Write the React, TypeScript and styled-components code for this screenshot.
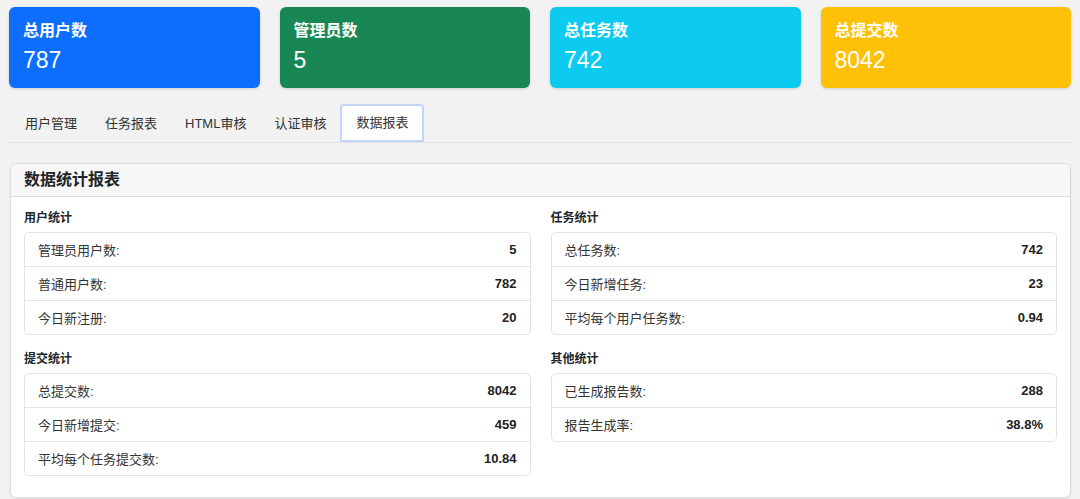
import React from "react";
import styled, { createGlobalStyle } from "styled-components";

const Global = createGlobalStyle`
  body { margin: 0; background: #f2f2f2; font-family: "Helvetica Neue", "Liberation Sans", "Noto Sans CJK SC", sans-serif; color: #212529; }
`;
const Page = styled.div`padding: 7px 9px 8px 9px;`;
const Cards = styled.div`display: grid; grid-template-columns: repeat(4, 1fr); gap: 20px;`;
const Card = styled.div<{ $bg: string }>`
  background: ${p => p.$bg}; color: #fff; border-radius: 6px; height: 81px; box-sizing: border-box;
  padding: 13px 14px; box-shadow: 0 1px 3px rgba(0,0,0,0.15);
`;
const CardTitle = styled.div`font-size: 16px; font-weight: 700; line-height: 22px;`;
const CardNum = styled.div`font-size: 23px; font-weight: 500; line-height: 30px; margin-top: 3px;`;
const Tabs = styled.div`display: flex; margin-top: 19px; border-bottom: 1px solid #dee2e6; height: 35px; padding-left: 2px;`;
const Tab = styled.div<{ $active?: boolean }>`
  font-size: 13px; padding: 0 14px; line-height: 33px; color: #333; box-sizing: border-box;
  ${p => p.$active ? "background:#fff; border:2px solid #c3d5f7; border-radius:4px 4px 0 0; height:38px; margin-top:-3px; line-height:34px;" : ""}
`;
const Panel = styled.div`
  margin-top: 20px; background: #fff; border: 1px solid #dcdcdc; border-radius: 6px; overflow: hidden;
  box-shadow: 0 1px 3px rgba(0,0,0,0.08); margin-left: 1px;
`;
const PanelHead = styled.div`background: #f7f7f7; border-bottom: 1px solid #dcdcdc; height: 32px; padding: 0 13px; font-size: 16px; font-weight: 700; line-height: 32px;`;
const Body = styled.div`display: grid; grid-template-columns: 1fr 1fr; column-gap: 20px; row-gap: 14px; padding: 11px 13px 21px;`;
const Section = styled.div``;
const SecTitle = styled.div`font-size: 12px; font-weight: 700; line-height: 20px; margin-bottom: 4px;`;
const List = styled.div`border: 1px solid #e3e3e3; border-radius: 5px;`;
const Row = styled.div`
  display: flex; justify-content: space-between; height: 33px; align-items: center; padding: 0 13px;
  font-size: 13px; color: #333; & + & { border-top: 1px solid #e3e3e3; }
`;
const Val = styled.span`font-weight: 700; color: #222;`;

const sections = [
  ["用户统计", [["管理员用户数:", "5"], ["普通用户数:", "782"], ["今日新注册:", "20"]]],
  ["任务统计", [["总任务数:", "742"], ["今日新增任务:", "23"], ["平均每个用户任务数:", "0.94"]]],
  ["提交统计", [["总提交数:", "8042"], ["今日新增提交:", "459"], ["平均每个任务提交数:", "10.84"]]],
  ["其他统计", [["已生成报告数:", "288"], ["报告生成率:", "38.8%"]]],
] as [string, string[][]][];

export default function App() {
  return (
    <Page>
      <Global />
      <Cards>
        <Card $bg="#0d6efd"><CardTitle>总用户数</CardTitle><CardNum>787</CardNum></Card>
        <Card $bg="#198754"><CardTitle>管理员数</CardTitle><CardNum>5</CardNum></Card>
        <Card $bg="#0dcaf0"><CardTitle>总任务数</CardTitle><CardNum>742</CardNum></Card>
        <Card $bg="#ffc107"><CardTitle>总提交数</CardTitle><CardNum>8042</CardNum></Card>
      </Cards>
      <Tabs>
        {["用户管理", "任务报表", "HTML审核", "认证审核"].map(t => <Tab key={t}>{t}</Tab>)}
        <Tab $active>数据报表</Tab>
      </Tabs>
      <Panel>
        <PanelHead>数据统计报表</PanelHead>
        <Body>
          {sections.map(([t, rows]) => (
            <Section key={t}>
              <SecTitle>{t}</SecTitle>
              <List>{rows.map(([k, v]) => <Row key={k}><span>{k}</span><Val>{v}</Val></Row>)}</List>
            </Section>
          ))}
        </Body>
      </Panel>
    </Page>
  );
}
